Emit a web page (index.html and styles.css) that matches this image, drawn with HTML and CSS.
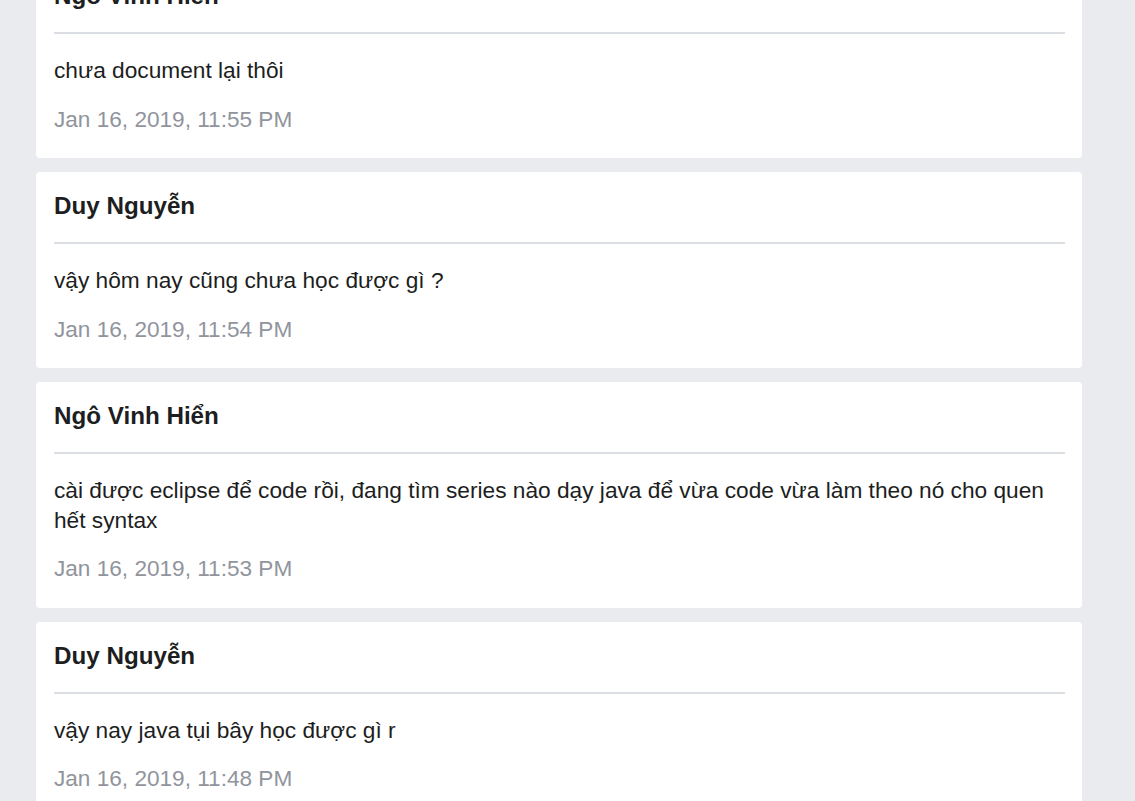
FILE: index.html
```html
<!DOCTYPE html>
<html lang="vi">
<head>
<meta charset="utf-8">
<title>Comments</title>
<link rel="stylesheet" href="styles.css">
</head>
<body>
<div class="feed">
  <div class="card">
    <div class="name">Ngô Vinh Hiển</div>
    <div class="divider"></div>
    <p class="msg">chưa document lại thôi</p>
    <div class="date">Jan 16, 2019, 11:55 PM</div>
  </div>
  <div class="card">
    <div class="name">Duy Nguyễn</div>
    <div class="divider"></div>
    <p class="msg">vậy hôm nay cũng chưa học được gì ?</p>
    <div class="date">Jan 16, 2019, 11:54 PM</div>
  </div>
  <div class="card">
    <div class="name">Ngô Vinh Hiển</div>
    <div class="divider"></div>
    <p class="msg">cài được eclipse để code rồi, đang tìm series nào dạy java để vừa code vừa làm theo nó cho quen hết syntax</p>
    <div class="date">Jan 16, 2019, 11:53 PM</div>
  </div>
  <div class="card">
    <div class="name">Duy Nguyễn</div>
    <div class="divider"></div>
    <p class="msg">vậy nay java tụi bây học được gì r</p>
    <div class="date">Jan 16, 2019, 11:48 PM</div>
  </div>
</div>
</body>
</html>
```
FILE: styles.css
```css
html, body {
  margin: 0;
  padding: 0;
  background: #e9ebee;
  font-family: "Liberation Sans", Arial, sans-serif;
  color: #1c1e21;
  overflow: hidden;
}
.feed {
  display: flex;
  flex-direction: column;
  gap: 14px;
  width: 1046px;
  margin: -38px 0 0 36px;
}
.card {
  background: #fff;
  border-radius: 4px;
  padding: 19px 17px 24.5px 18px;
}
.name {
  font-size: 24.2px;
  line-height: 30px;
  font-weight: 700;
}
.divider {
  height: 2px;
  background: #dadde1;
  margin: 21px 0 22px;
}
.msg {
  margin: 0 0 19px;
  font-size: 22.7px;
  line-height: 29.5px;
}
.date {
  font-size: 22.6px;
  line-height: 29px;
  color: #90949c;
}
```
